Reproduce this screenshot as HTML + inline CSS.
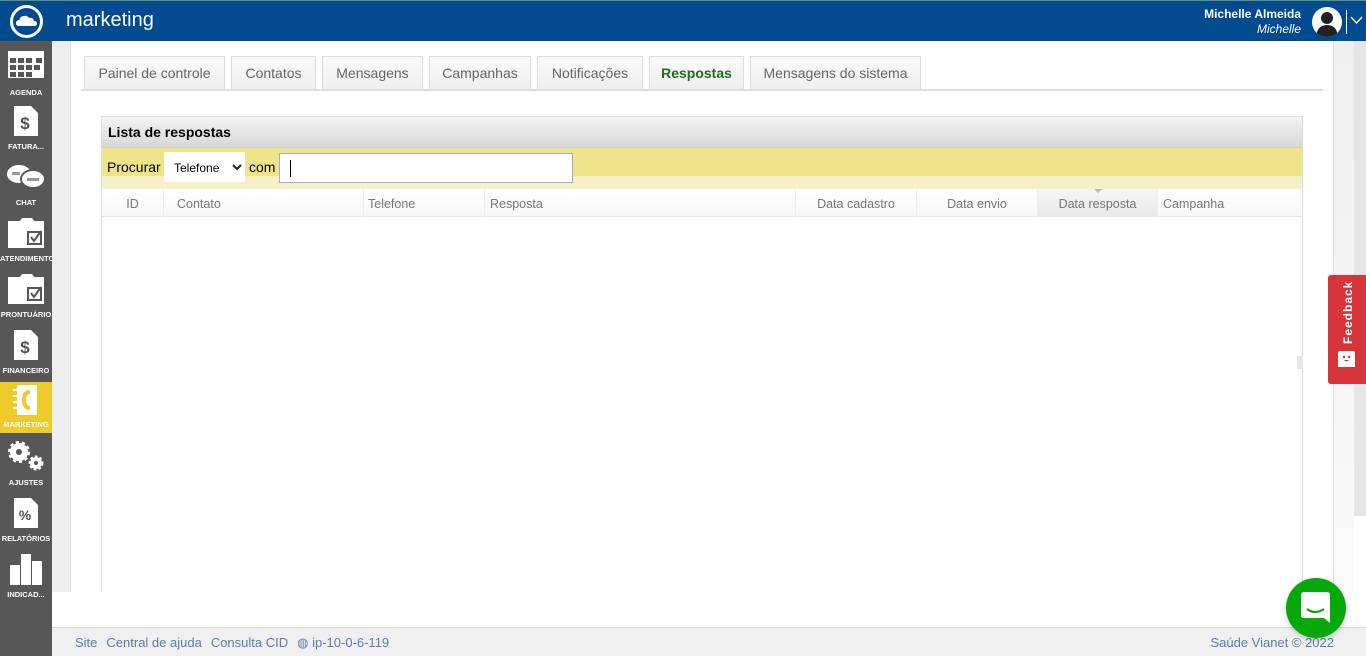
<!DOCTYPE html>
<html><head><meta charset="utf-8"><style>
*{box-sizing:border-box;margin:0;padding:0}
body{width:1366px;height:656px;overflow:hidden;position:relative;background:#fff;font-family:"Liberation Sans","DejaVu Sans",sans-serif}
.hdr{position:absolute;left:0;top:0;width:1366px;height:41px;background:#004a8f;border-top:1px solid #6a8a6a}
.logo{position:absolute;left:10px;top:4px;width:33px;height:33px;border:3px solid #fff;border-radius:50%}
.ttl{position:absolute;left:66px;top:8px;color:#fff;font-size:20px}
.uname{position:absolute;right:65px;top:6px;color:#fff;font-size:12px;font-weight:bold;text-align:right;line-height:15px}
.uname i{font-weight:normal}
.av{position:absolute;left:1312px;top:6px;width:30px;height:30px;border-radius:50%;background:#fff;overflow:hidden}
.side{position:absolute;left:0;top:41px;width:52px;height:615px;background:#575757}
.it{position:absolute;left:0;width:52px;height:52px;color:#fff;font-size:7.5px;font-weight:bold;text-align:center}
.it span{position:absolute;left:0;right:0;bottom:4px;white-space:nowrap;overflow:hidden}
.lg{position:absolute;left:52px;top:41px;width:18px;height:551px;background:#eee}
.rg{position:absolute;left:1333px;top:41px;width:21px;height:551px;background:linear-gradient(#efefef,#fafafa)}
.rg2{position:absolute;left:1354px;top:41px;width:12px;height:475px;background:#e5e5e5}
.tab{position:absolute;top:56px;height:34px;border:1px solid #ddd;border-bottom:none;background:linear-gradient(#fafafa,#efefef);color:#666;font-size:14px;text-align:center;line-height:33px}
.tabline{position:absolute;left:81px;top:89px;width:1242px;height:2px;background:#ddd}
.panel{position:absolute;left:101px;top:116px;width:1202px;height:476px;border:1px solid #ddd;border-bottom:none}
.ph{height:31px;background:linear-gradient(#f4f4f4,#d8d8d8);font-weight:bold;font-size:14px;padding:7px 6px;border-bottom:1px solid #ccc}
.sr{height:41px;background:linear-gradient(#efe48a 0,#efe48a 28px,#f5f0c5 28px);position:relative;font-size:14px}
.col{position:absolute;top:189px;height:28px;font-size:12.5px;color:#777;line-height:30px;border-right:1px solid #eee;background:linear-gradient(#fff,#f7f7f7);border-bottom:1px solid #e6e6e6}
.foot{position:absolute;left:52px;top:627px;width:1314px;height:29px;background:#f0f0f0;border-top:1px solid #d8d8d8;font-size:13px;color:#5a7fae;line-height:29px}
</style></head><body>
<div class="hdr">
<div class="logo"><svg width="27" height="27" viewBox="0 0 27 27" style="position:absolute;left:0;top:0"><path d="M6 18 Q3 18 3 15 Q3 12 6.5 12 Q7 8 11 8 Q14 7 16 10 Q20 9 21 13 Q24 13 24 15.5 Q24 18 21 18 Z" fill="#fff"/></svg></div>
<div class="ttl">marketing</div>
<div class="uname">Michelle Almeida<br><i>Michelle</i></div>
<div class="av"><svg width="30" height="30"><circle cx="15" cy="11" r="6" fill="#222"/><path d="M4 30 Q5 18 15 18 Q25 18 26 30Z" fill="#222"/></svg></div>
<div style="position:absolute;left:1346px;top:9px;width:1px;height:24px;background:#fff"></div>
<svg style="position:absolute;left:1350px;top:14px" width="13" height="10"><path d="M1 2 L6.5 8 L12 2" stroke="#fff" fill="none" stroke-width="1.3"/></svg>
</div>
<div class="side">
<div class="it" style="top:6px"><svg width="38" height="30" style="margin-top:3px"><rect x="1" y="1" width="36" height="27" fill="#fff"/><g fill="#555"><rect x="3" y="8" width="6" height="5"/><rect x="11" y="8" width="6" height="5"/><rect x="19" y="8" width="6" height="5"/><rect x="29" y="8" width="6" height="5"/><rect x="3" y="15" width="6" height="5"/><rect x="11" y="15" width="6" height="5"/><rect x="19" y="15" width="6" height="5"/><rect x="27" y="15" width="6" height="5"/><rect x="3" y="22" width="6" height="5"/><rect x="11" y="22" width="6" height="5"/><rect x="19" y="22" width="6" height="5"/></g></svg><span style="bottom:2px">AGENDA</span></div>
<div class="it" style="top:62px"><svg width="26" height="32" style="margin-top:2px"><path d="M1 1 H18 L25 8 V31 H1Z" fill="#fff"/><text x="12" y="24" font-size="17" font-weight="bold" text-anchor="middle" fill="#555" font-family="Liberation Sans">$</text></svg><span>FATURA...</span></div>
<div class="it" style="top:118px"><svg width="42" height="30" style="margin-top:4px"><ellipse cx="14" cy="11" rx="12" ry="9" fill="#fff"/><ellipse cx="28" cy="16" rx="12" ry="9" fill="#fff" stroke="#575757" stroke-width="2"/><rect x="22" y="15" width="12" height="3" fill="#999"/><rect x="7" y="9" width="8" height="3" fill="#999"/></svg><span>CHAT</span></div>
<div class="it" style="top:174px"><svg width="40" height="32" style="margin-top:2px"><path d="M2 4 H14 L16 1 H26 L28 4 H38 V31 H2Z" fill="#fff"/><rect x="22" y="15" width="13" height="12" fill="none" stroke="#555" stroke-width="2"/><path d="M25 20 L28 24 L35 14" stroke="#555" fill="none" stroke-width="2"/></svg><span>ATENDIMENTO</span></div>
<div class="it" style="top:230px"><svg width="40" height="32" style="margin-top:2px"><path d="M2 4 H14 L16 1 H26 L28 4 H38 V31 H2Z" fill="#fff"/><rect x="22" y="15" width="13" height="12" fill="none" stroke="#555" stroke-width="2"/><path d="M25 20 L28 24 L35 14" stroke="#555" fill="none" stroke-width="2"/></svg><span>PRONTUÁRIO</span></div>
<div class="it" style="top:286px"><svg width="26" height="32" style="margin-top:2px"><path d="M1 1 H18 L25 8 V31 H1Z" fill="#fff"/><text x="12" y="24" font-size="17" font-weight="bold" text-anchor="middle" fill="#555" font-family="Liberation Sans">$</text></svg><span>FINANCEIRO</span></div>
<div class="it" style="top:341px;height:51px;background:#f0c92a"><svg width="26" height="32" style="margin-top:2px"><rect x="4" y="1" width="20" height="30" fill="#fff"/><g stroke="#fff" stroke-width="2"><path d="M0 6H6M0 12H6M0 18H6M0 24H6"/></g><path d="M17 8 Q11 8 11 16 Q11 24 17 24" stroke="#f0c92a" stroke-width="4" fill="none"/></svg><span>MARKETING</span></div>
<div class="it" style="top:398px"><svg width="42" height="34"><circle cx="14" cy="13" r="9" fill="#fff" stroke="#fff" stroke-width="4" stroke-dasharray="3 2.6"/><circle cx="14" cy="13" r="3" fill="#575757"/><circle cx="31" cy="24" r="6" fill="#fff" stroke="#fff" stroke-width="3" stroke-dasharray="2.5 2"/><circle cx="31" cy="24" r="2" fill="#575757"/></svg><span>AJUSTES</span></div>
<div class="it" style="top:454px"><svg width="26" height="32" style="margin-top:2px"><path d="M1 1 H18 L25 8 V31 H1Z" fill="#fff"/><text x="12" y="23" font-size="14" text-anchor="middle" fill="#555" font-family="Liberation Sans">%</text></svg><span>RELATÓRIOS</span></div>
<div class="it" style="top:510px"><svg width="36" height="34"><rect x="2" y="14" width="10" height="20" fill="#fff"/><rect x="13" y="3" width="10" height="31" fill="#fff"/><rect x="24" y="10" width="10" height="24" fill="#fff"/></svg><span>INDICAD...</span></div>
</div>
<div class="lg"></div><div class="rg"></div><div class="rg2"></div>
<div style="position:absolute;left:70px;top:41px;width:1px;height:551px;background:#ddd"></div>
<div style="position:absolute;left:1333px;top:41px;width:1px;height:551px;background:#ddd"></div>
<div class="tab" style="left:84px;width:141px">Painel de controle</div>
<div class="tab" style="left:231px;width:85px">Contatos</div>
<div class="tab" style="left:322px;width:101px">Mensagens</div>
<div class="tab" style="left:429px;width:102px">Campanhas</div>
<div class="tab" style="left:537px;width:106px">Notificações</div>
<div class="tab" style="left:649px;width:95px;color:#1f6b1f;font-weight:bold">Respostas</div>
<div class="tab" style="left:750px;width:171px">Mensagens do sistema</div>
<div class="tabline"></div>
<div class="panel">
<div class="ph">Lista de respostas</div>
<div class="sr">
<span style="position:absolute;left:5px;top:11px">Procurar</span>
<div style="position:absolute;left:62px;top:4px;width:81px;height:30px;background:#fff;font-size:12px;line-height:32px;padding-left:10px">Telefone<svg style="position:absolute;right:3px;top:12px" width="10" height="7"><path d="M1 1L5 5L9 1" stroke="#222" stroke-width="2" fill="none"/></svg></div>
<span style="position:absolute;left:147px;top:11px">com</span>
<div style="position:absolute;left:177px;top:5px;width:294px;height:30px;background:#fff;border:1px solid #8fb4dc"><div style="position:absolute;left:10px;top:6px;width:1px;height:17px;background:#000"></div></div>
</div>
</div>
<div class="col" style="left:102px;width:62px;text-align:center">ID</div>
<div class="col" style="left:164px;width:200px;padding-left:13px">Contato</div>
<div class="col" style="left:364px;width:121px;padding-left:4px">Telefone</div>
<div class="col" style="left:485px;width:311px;padding-left:5px">Resposta</div>
<div class="col" style="left:796px;width:121px;text-align:center">Data cadastro</div>
<div class="col" style="left:917px;width:121px;text-align:center">Data envio</div>
<div class="col" style="left:1038px;width:120px;text-align:center;background:linear-gradient(#f6f6f6,#e9e9e9)">Data resposta</div>
<div class="col" style="left:1158px;width:144px;padding-left:5px;border-right:none">Campanha</div>
<svg style="position:absolute;left:1094px;top:189px" width="8" height="5"><path d="M0 0H8L4 4Z" fill="#bbb"/></svg>
<div style="position:absolute;left:1297px;top:356px;width:6px;height:13px;background:#e6e6e6"></div>
<div style="position:absolute;left:1328px;top:275px;width:38px;height:109px;background:#d6333a;border-radius:3px 0 0 3px">
<div style="position:absolute;left:-10px;top:32px;width:60px;transform:rotate(-90deg);color:#fff;font-size:12px;font-weight:bold;letter-spacing:1px;text-align:center">Feedback</div>
<svg style="position:absolute;left:10px;top:76px" width="17" height="16"><path d="M0 2 Q0 0 2 0 H15 Q17 0 17 2 V16 H0Z" fill="#fff"/><circle cx="6" cy="6" r="1.2" fill="#d6333a"/><circle cx="11" cy="6" r="1.2" fill="#d6333a"/><path d="M6 9 Q8.5 12 11 9" fill="#d6333a"/></svg>
</div>
<div class="foot"><span style="margin-left:23px">Site</span><span style="margin-left:9px">Central de ajuda</span><span style="margin-left:9px">Consulta CID</span><span style="margin-left:9px">◍ ip-10-0-6-119</span><span style="position:absolute;right:32px">Saúde Vianet © 2022</span></div>
<div style="position:absolute;left:1286px;top:578px;width:60px;height:60px;border-radius:50%;background:#06a80a;box-shadow:0 2px 6px rgba(0,0,0,.2)">
<svg style="position:absolute;left:15px;top:14px" width="30" height="32"><path d="M3 0 H26 Q29 0 29 3 V31 L23 26 H3 Q0 26 0 23 V3 Q0 0 3 0Z" fill="#fff"/><path d="M6 17 Q14 23 23 17" stroke="#06a80a" stroke-width="2.2" fill="none"/></svg>
</div>
</body></html>
